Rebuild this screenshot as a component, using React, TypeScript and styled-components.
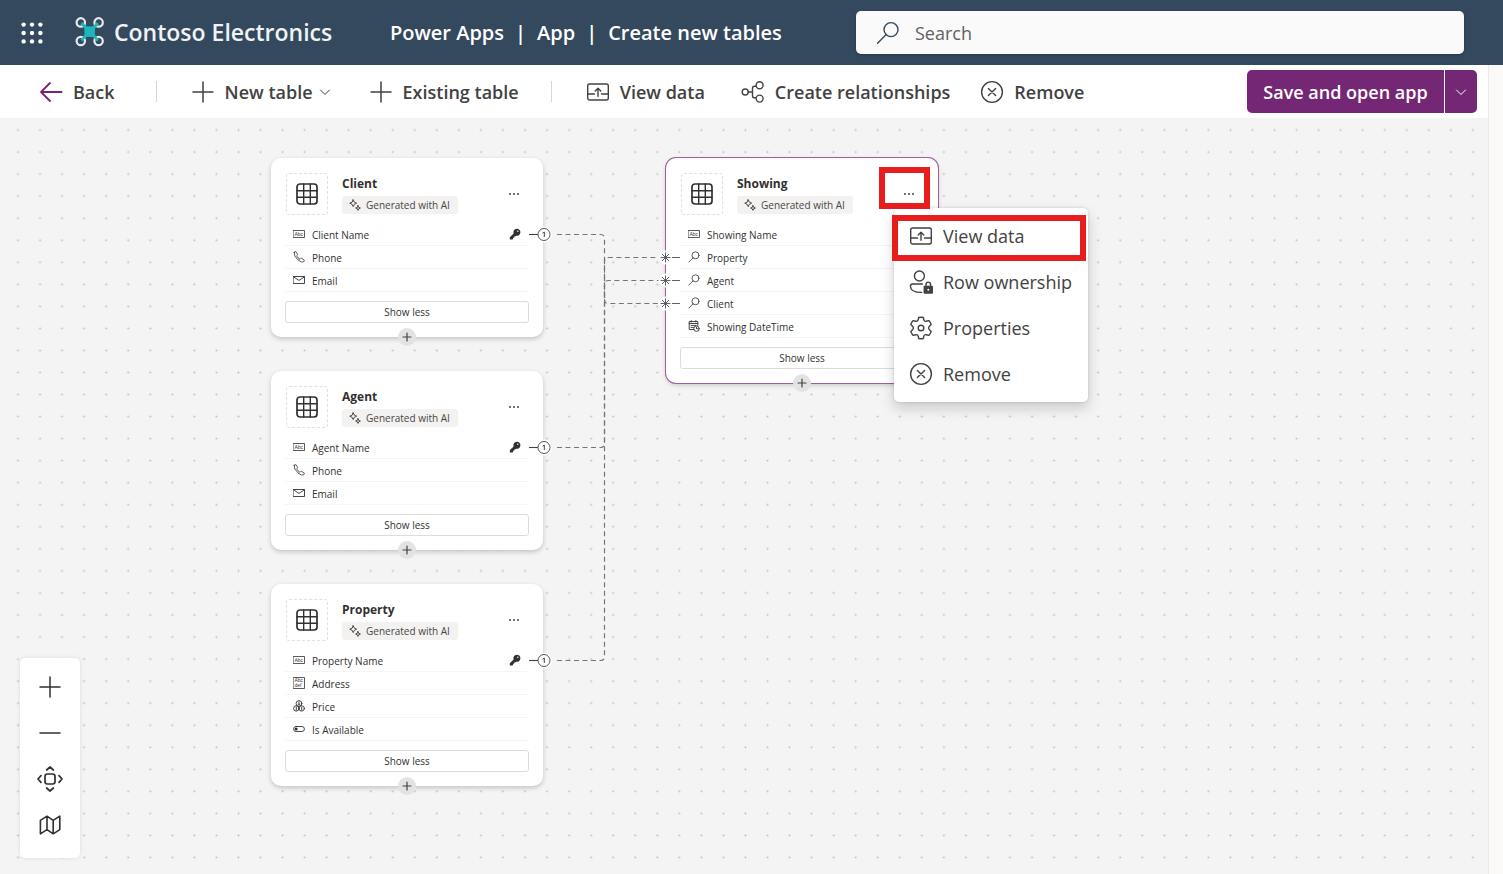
import React from "react";
import styled, { createGlobalStyle, css } from "styled-components";

const GlobalStyle = createGlobalStyle`
  *, *::before, *::after { box-sizing: border-box; }
  body {
    margin: 0;
    background: #faf9f8;
    color: #323130;
    font-family: "Open Sans", "Noto Sans", sans-serif;
  }
  button, input { font: inherit; color: inherit; }
  button { border: 0; padding: 0; background: none; cursor: pointer; }
`;

/* ---------- icons ---------- */

type IconProps = { size?: number };

const Svg = ({
  size = 24,
  box = 24,
  stroke = 1.3,
  children,
}: {
  size?: number;
  box?: number;
  stroke?: number;
  children: React.ReactNode;
}) => (
  <svg
    width={size}
    height={size}
    viewBox={`0 0 ${box} ${box}`}
    fill="none"
    stroke="currentColor"
    strokeWidth={stroke}
    strokeLinecap="round"
    strokeLinejoin="round"
    aria-hidden="true"
  >
    {children}
  </svg>
);

const WaffleIcon = () => (
  <svg width="22" height="22" viewBox="0 0 22 22" fill="#fff" aria-hidden="true">
    {[2.6, 11, 19.4].map((y) =>
      [2.6, 11, 19.4].map((x) => <circle key={`${x}-${y}`} cx={x} cy={y} r="2.2" />)
    )}
  </svg>
);

const DroneLogo = () => (
  <svg width="30" height="30" viewBox="0 0 30 30" fill="none" aria-hidden="true">
    <g stroke="#e6eaee" strokeWidth="2.2">
      <circle cx="5.8" cy="5.4" r="4.2" />
      <circle cx="23.600" cy="5.400" r="4.200" />
      <circle cx="5.800" cy="24" r="4.200" />
      <circle cx="23.600" cy="24" r="4.200" />
    </g>
    <path
      d="M7.600 5Q14.700 15.200 21.800 5L24 7.200Q14.700 14.700 24 22.200L21.800 24.400Q14.700 14.200 7.600 24.400L5.400 22.200Q14.700 14.700 5.400 7.200Z"
      fill="#1fb5bd"
    />
    <circle cx="14.700" cy="14.700" r="5.400" fill="#1fb5bd" />
  </svg>
);

const SearchIcon = ({ size = 24 }: IconProps) => (
  <Svg size={size} stroke={size < 16 ? 1.6 : 1.4}>
    <circle cx="15" cy="8.6" r="7" />
    <path d="M10.2 13.6L1.6 22.2" />
  </Svg>
);

const BackIcon = () => (
  <Svg stroke={1.8}>
    <path d="M22.6 12H2M11 3L2 12l9 9" />
  </Svg>
);

const PlusIcon = () => (
  <Svg stroke={1.5}>
    <path d="M12 2v20M2 12h20" />
  </Svg>
);

const SmallPlusIcon = () => (
  <Svg size={10} box={10} stroke={1.2}>
    <path d="M5 1v8M1 5h8" />
  </Svg>
);

const MinusIcon = () => (
  <Svg stroke={1.5}>
    <path d="M2 12h20" />
  </Svg>
);

const ChevronIcon = () => (
  <Svg size={12} box={12} stroke={1}>
    <path d="M1.500 4L6 8.500 10.500 4" />
  </Svg>
);

const ViewDataIcon = () => (
  <Svg stroke={1.4}>
    <rect x="1.7" y="4" width="20.6" height="16" rx="2" />
    <path d="M2 14h6.5M15.5 14H22M12 16.2V8.4M9.2 11L12 8.2l2.8 2.8" />
  </Svg>
);

const RelationIcon = () => (
  <Svg stroke={1.4}>
    <circle cx="4.2" cy="12" r="3" />
    <circle cx="18.6" cy="5.2" r="3.5" />
    <circle cx="18.6" cy="18.6" r="3.5" />
    <path d="M7.2 12h4.3M15 6.2h-1.4q-2.1 0-2.1 2.1v7.4q0 2.1 2.1 2.1h1.4" />
  </Svg>
);

const RemoveIcon = () => (
  <Svg stroke={1.4}>
    <circle cx="12" cy="12" r="10.4" />
    <path d="M8.4 8.4l7.2 7.2M15.6 8.4l-7.2 7.2" />
  </Svg>
);

const OwnerIcon = () => (
  <Svg stroke={1.4}>
    <circle cx="10.400" cy="6" r="5" />
    <path d="M13.500 14H3.600Q1.400 14 1.400 16.200 1.400 22.400 12.600 22.400" />
    <rect x="14.600" y="15.800" width="9.400" height="8" rx="1" fill="currentColor" stroke="none" />
    <path d="M17 16v-1.600a2.300 2.300 0 0 1 4.600 0V16" />
    <circle cx="19.300" cy="19.800" r="1" fill="#fff" stroke="none" />
  </Svg>
);

const GearIcon = () => (
  <Svg stroke={1.4}>
    <circle cx="12" cy="12" r="2.800" />
    <path d="M9.700 1.500Q12 .9 14.300 1.500L14.900 4.100Q15.500 5.700 17.200 5.300L19.800 4.600Q21.500 6.300 22.200 8.600L20.200 10.500Q18.900 12 20.200 13.500L22.200 15.400Q21.500 17.700 19.800 19.400L17.200 18.700Q15.500 18.300 14.900 19.900L14.300 22.500Q12 23.100 9.700 22.500L9.100 19.900Q8.500 18.300 6.800 18.700L4.200 19.400Q2.500 17.700 1.800 15.400L3.800 13.500Q5.100 12 3.800 10.500L1.800 8.600Q2.500 6.300 4.200 4.600L6.800 5.300Q8.500 5.700 9.100 4.100Z" />
  </Svg>
);

const FitIcon = () => (
  <Svg size={28} box={28} stroke={1.7}>
    <rect x="9" y="9" width="10" height="10" rx="2.4" />
    <path d="M10.600 5L14 2l3.400 3M10.600 23l3.400 3 3.400-3M5 10.600L2 14l3 3.400M23 10.600L26 14l-3 3.400" />
  </Svg>
);

const MapIcon = () => (
  <Svg stroke={1.6}>
    <path d="M2.400 7.400L9 3.200l6.200 4.200 6.600-4.200v13.400L15.200 20.800 9 16.600l-6.600 4.200zM9 3.200v13.400M15.200 7.400v13.400" />
  </Svg>
);

const TableIcon = () => (
  <Svg stroke={1.7}>
    <rect x="2" y="2" width="20" height="20" rx="3" />
    <path d="M8.700 2v20M15.300 2v20M2 8.700h20M2 15.300h20" strokeWidth={1.4} />
  </Svg>
);

const SparkleIcon = () => (
  <Svg size={12} box={12} stroke={1}>
    <path d="M4.200 .8L5.300 3.100 7.600 4.200 5.300 5.300 4.200 7.600 3.100 5.300 .8 4.200 3.100 3.100z" />
    <path d="M9 6.600l.7 1.700 1.700.7-1.700.7L9 11.400l-.7-1.700L6.600 9l1.700-.7z" />
  </Svg>
);

const MoreIcon = () => (
  <svg width="12" height="4" viewBox="0 0 12 4" fill="currentColor" aria-hidden="true">
    <circle cx="2" cy="2" r=".9" />
    <circle cx="6" cy="2" r=".9" />
    <circle cx="10" cy="2" r=".9" />
  </svg>
);

const KeyIcon = () => (
  <svg width="12" height="12" viewBox="0 0 12 12" aria-hidden="true">
    <path
      d="M7.700 .8a3.500 3.500 0 1 1-.6 6.900L6.200 8.600H5.200v1.100H4.100v1.100L3.500 11.400H.8V9.300L4.600 5.500A3.500 3.500 0 0 1 7.700 .8z"
      fill="currentColor"
    />
    <circle cx="8.800" cy="3.200" r=".7" fill="#fff" />
  </svg>
);

const GlyphText = styled.text`
  font-family: "Liberation Sans", sans-serif;
  font-size: 5px;
  fill: currentColor;
  stroke: none;
`;

const TextFieldIcon = () => (
  <Svg size={12} box={12} stroke={0.8}>
    <rect x=".5" y="2.500" width="11" height="7" />
    <GlyphText x="1.500" y="8">Abc</GlyphText>
  </Svg>
);

const MultilineIcon = () => (
  <Svg size={12} box={12} stroke={0.8}>
    <rect x=".5" y=".5" width="11" height="11" />
    <GlyphText x="1.500" y="5.200">Abc</GlyphText>
    <GlyphText x="1.500" y="10.200">def</GlyphText>
  </Svg>
);

const PhoneIcon = () => (
  <Svg size={12} box={12} stroke={0.8}>
    <path d="M1.200 1.300L2.800 .6 4.800 3.600 3.600 4.700Q4.600 7 7.100 8.300L8.300 7.100 11.400 9.200 10.600 10.900Q8.800 12 5 8.900 .4 5 1.200 1.300z" />
  </Svg>
);

const MailIcon = () => (
  <Svg size={12} box={12} stroke={0.9}>
    <rect x=".5" y="2.500" width="11" height="7" />
    <path d="M.8 3L6 6.400 11.200 3" />
  </Svg>
);

const DateIcon = () => (
  <Svg size={12} box={12} stroke={0.9}>
    <path d="M5.500 9.500H1.200v-8h8.600v4M1.200 3.500h8.600M3 5.400h5M3 7.400h2.500M3.200 .6v1.400M7.800 .6v1.400" />
    <circle cx="8.500" cy="8.700" r="2.700" />
    <path d="M8.500 7.300v1.500h1.200" />
  </Svg>
);

const CurrencyIcon = () => (
  <Svg size={12} box={12} stroke={0.9}>
    <circle cx="6" cy="3.500" r="2.900" />
    <circle cx="3.300" cy="8.400" r="2.700" />
    <circle cx="8.700" cy="8.400" r="2.700" />
    <path d="M6 2v3M3.300 7v3M8.700 7v3M5.200 4.200h1.600" />
  </Svg>
);

const ToggleIcon = () => (
  <Svg size={12} box={12} stroke={0.9}>
    <rect x=".6" y="3.500" width="10.800" height="5" rx="2.500" />
    <circle cx="3.200" cy="6" r="1.500" fill="currentColor" stroke="none" />
  </Svg>
);

/* ---------- header ---------- */

const Page = styled.div`
  display: flex;
  flex-direction: column;
  min-height: 100vh;
`;

const Header = styled.header`
  display: flex;
  align-items: center;
  height: 65px;
  padding: 0 39px 0 20px;
  background: #34495e;
  color: #fff;
`;

const Waffle = styled.button`
  display: flex;
  align-items: center;
  justify-content: center;
  width: 24px;
  height: 24px;
`;

const Brand = styled.a`
  display: flex;
  align-items: center;
  gap: 9px;
  margin-left: 31px;
  width: 315px;
  padding-bottom: 2px;
  color: #f0f3f5;
  font-size: 23px;
  line-height: 30px;
  font-weight: 600;
  text-decoration: none;
  white-space: nowrap;
`;

const Crumbs = styled.nav`
  display: flex;
  flex: none;
  gap: 11px;
  width: 466px;
  font-size: 20px;
  line-height: 28px;
  font-weight: 600;
  white-space: nowrap;

  a { color: inherit; text-decoration: none; }
`;

const SearchBox = styled.label`
  display: flex;
  flex: 1;
  align-items: center;
  gap: 15px;
  height: 43px;
  padding: 0 20px;
  border-radius: 5px;
  background: #fafafa;
  box-shadow: 0 1px 3px rgba(0, 0, 0, 0.25);
  color: #34495e;
`;

const SearchInput = styled.input.attrs({ type: "search" })`
  flex: 1;
  min-width: 0;
  padding: 0;
  border: 0;
  outline: 0;
  background: transparent;
  font-size: 18px;
  line-height: 28px;

  &::placeholder { color: #616161; opacity: 1; }
`;

/* ---------- command bar ---------- */

const Body = styled.main`
  display: flex;
  flex: 1;
  flex-direction: column;
  margin-right: 14px;
  border-right: 1px solid #edebe9;
`;

const CommandBar = styled.div`
  display: flex;
  align-items: center;
  height: 53px;
  padding: 0 11px 0 39px;
  background: #fff;
`;

const Command = styled.button<{ $gap?: number }>`
  display: flex;
  align-items: center;
  gap: 10px;
  margin-right: ${(p) => p.$gap ?? 36}px;
  color: #424242;
  font-size: 18px;
  line-height: 26px;
  font-weight: 600;
  white-space: nowrap;

  > svg:last-child:not(:first-child) { margin-left: -4px; }
`;

const Purple = styled.span`
  display: flex;
  color: #742774;
`;

const Divider = styled.span<{ $after: number }>`
  width: 1px;
  height: 21px;
  margin-right: ${(p) => p.$after}px;
  background: #d6d6d6;
`;

const SplitButton = styled.div`
  display: flex;
  height: 43px;
  margin-left: auto;
  border-radius: 5px;
  overflow: hidden;
  background: #742774;
  color: #fff;
  font-size: 18px;
  line-height: 26px;
  font-weight: 600;
  white-space: nowrap;
`;

const SaveButton = styled.button`
  width: 197px;
`;

const SaveMenuButton = styled.button`
  display: flex;
  align-items: center;
  justify-content: center;
  width: 33px;
  border-left: 1px solid #fff;
`;

/* ---------- canvas ---------- */

const Canvas = styled.section`
  position: relative;
  flex: 1;
  min-height: 700px;
  overflow: hidden;
  background: #f4f4f4;
`;

const Backdrop = styled.svg`
  position: absolute;
  inset: 0;
  width: 100%;
  height: 100%;
`;

const Card = styled.article<{ $x: number; $y: number; $selected?: boolean }>`
  position: absolute;
  left: ${(p) => p.$x}px;
  top: ${(p) => p.$y}px;
  width: 272px;
  padding: 15px 14px 14px;
  border-radius: 10px;
  background: #fff;
  box-shadow: ${(p) => (p.$selected ? "0 0 0 1px #a15fa1, " : "")}0 2px 5px rgba(0, 0, 0, 0.2);
`;

const CardHead = styled.div`
  display: flex;
  gap: 14px;
  height: 42px;
  padding: 0 9px 0 1px;
`;

const TableTile = styled.div`
  display: flex;
  align-items: center;
  justify-content: center;
  width: 42px;
  height: 42px;
  border: 1px dashed #e0e0e0;
  border-radius: 3px;
`;

const CardTitles = styled.div`
  display: flex;
  flex: 1;
  flex-direction: column;
  align-items: flex-start;
  gap: 2px;
  padding-top: 1px;
`;

const CardTitle = styled.h2`
  margin: 0;
  font-size: 12px;
  line-height: 20px;
  font-weight: 700;
`;

const AiTag = styled.span`
  display: flex;
  align-items: center;
  gap: 5px;
  height: 18px;
  padding: 0 8px 0 7px;
  border-radius: 3px;
  background: #f3f2f1;
  color: #484644;
  font-size: 10px;
  line-height: 18px;
`;

const MoreButton = styled.button`
  display: flex;
  align-items: center;
  height: 42px;
`;

const Fields = styled.ul`
  margin: 8px 0 9px;
  padding: 0;
  list-style: none;
`;

const Field = styled.li`
  position: relative;
  display: flex;
  align-items: center;
  gap: 7px;
  height: 23px;
  padding: 0 8px;
  border-bottom: 1px solid #f5f5f5;
  font-size: 10px;
  line-height: 20px;
`;

const FieldLabel = styled.span`
  padding-top: 2px;
`;

const KeyMark = styled.span`
  display: flex;
  margin-left: auto;
`;

const handle = css`
  position: absolute;
  top: 2px;
  width: 24px;
  height: 18px;
`;

const OneHandle = styled.svg`
  ${handle}
  left: 100%;
`;

const ManyHandle = styled.svg`
  ${handle}
  right: 100%;
`;

const ShowLess = styled.button`
  display: block;
  width: 100%;
  height: 22px;
  border: 1px solid #dcdcdc;
  border-radius: 3px;
  font-size: 10px;
  line-height: 20px;
`;

const AddButton = styled.button`
  position: absolute;
  left: 50%;
  bottom: -9px;
  display: flex;
  align-items: center;
  justify-content: center;
  width: 18px;
  height: 18px;
  margin-left: -9px;
  border-radius: 50%;
  background: #e3e3e3;
  color: #424242;
`;

const Menu = styled.div`
  position: absolute;
  left: 894px;
  top: 90px;
  width: 194px;
  padding: 5px 0;
  border-radius: 5px;
  background: #fff;
  box-shadow: 0 6px 14px rgba(0, 0, 0, 0.18), 0 0 3px rgba(0, 0, 0, 0.14);
`;

const MenuItem = styled.button`
  display: flex;
  align-items: center;
  gap: 10px;
  width: 100%;
  height: 46px;
  padding: 0 15px;
  color: #424242;
  font-size: 18px;
  line-height: 26px;
  white-space: nowrap;
`;

const Highlight = styled.div<{ $x: number; $y: number; $w: number; $h: number }>`
  position: absolute;
  left: ${(p) => p.$x}px;
  top: ${(p) => p.$y}px;
  width: ${(p) => p.$w}px;
  height: ${(p) => p.$h}px;
  border: 6px solid #e81e1e;
  pointer-events: none;
`;

const ZoomPanel = styled.div`
  position: absolute;
  left: 20px;
  bottom: 16px;
  width: 60px;
  padding: 6px 0 10px;
  border-radius: 5px;
  background: #fff;
  box-shadow: 0 0 4px rgba(0, 0, 0, 0.1);
`;

const ZoomButton = styled.button`
  display: flex;
  align-items: center;
  justify-content: center;
  width: 100%;
  height: 46px;
`;

/* ---------- data ---------- */

type FieldData = { label: string; icon: React.ReactNode; key?: boolean; many?: boolean };
type TableData = { name: string; x: number; y: number; selected?: boolean; fields: FieldData[] };

const tables: TableData[] = [
  {
    name: "Client",
    x: 271,
    y: 40,
    fields: [
      { label: "Client Name", icon: <TextFieldIcon />, key: true },
      { label: "Phone", icon: <PhoneIcon /> },
      { label: "Email", icon: <MailIcon /> },
    ],
  },
  {
    name: "Agent",
    x: 271,
    y: 253,
    fields: [
      { label: "Agent Name", icon: <TextFieldIcon />, key: true },
      { label: "Phone", icon: <PhoneIcon /> },
      { label: "Email", icon: <MailIcon /> },
    ],
  },
  {
    name: "Property",
    x: 271,
    y: 466,
    fields: [
      { label: "Property Name", icon: <TextFieldIcon />, key: true },
      { label: "Address", icon: <MultilineIcon /> },
      { label: "Price", icon: <CurrencyIcon /> },
      { label: "Is Available", icon: <ToggleIcon /> },
    ],
  },
  {
    name: "Showing",
    x: 666,
    y: 40,
    selected: true,
    fields: [
      { label: "Showing Name", icon: <TextFieldIcon /> },
      { label: "Property", icon: <SearchIcon size={12} />, many: true },
      { label: "Agent", icon: <SearchIcon size={12} />, many: true },
      { label: "Client", icon: <SearchIcon size={12} />, many: true },
      { label: "Showing DateTime", icon: <DateIcon /> },
    ],
  },
];

const edges = [
  "M557 116.500H600.500Q604.500 116.500 604.500 120.500V181.500Q604.500 185.500 608.500 185.500H660",
  "M557 329.500H600.500Q604.500 329.500 604.500 325.500V166.500Q604.500 162.500 608.500 162.500H660",
  "M557 542.500H600.500Q604.500 542.500 604.500 538.500V143.500Q604.500 139.500 608.500 139.500H660",
];

const TableCard = ({ table }: { table: TableData }) => (
  <Card $x={table.x} $y={table.y} $selected={table.selected}>
    <CardHead>
      <TableTile>
        <TableIcon />
      </TableTile>
      <CardTitles>
        <CardTitle>{table.name}</CardTitle>
        <AiTag>
          <SparkleIcon />
          Generated with AI
        </AiTag>
      </CardTitles>
      <MoreButton aria-label={`More options for ${table.name}`}>
        <MoreIcon />
      </MoreButton>
    </CardHead>
    <Fields>
      {table.fields.map((f) => (
        <Field key={f.label}>
          {f.icon}
          <FieldLabel>{f.label}</FieldLabel>
          {f.key && (
            <>
              <KeyMark>
                <KeyIcon />
              </KeyMark>
              <OneHandle viewBox="0 0 24 18" aria-hidden="true">
                <circle cx="15" cy="9.500" r="8" fill="#fff" />
                <path d="M0 9.500h9" stroke="#424242" strokeWidth="1.100" />
                <circle cx="15" cy="9.500" r="6" fill="#fff" stroke="#555" />
                <path d="M13.600 8.300l1.700-1.300v5" stroke="#424242" fill="none" />
              </OneHandle>
            </>
          )}
          {f.many && (
            <ManyHandle viewBox="0 0 24 18" aria-hidden="true">
              <circle cx="9.500" cy="9.500" r="7" fill="#fff" />
              <path
                d="M16 9.500h8M4.500 9.500h10M9.500 4.500v10M6 6l7 7M13 6l-7 7"
                stroke="#505050"
                strokeWidth=".9"
              />
            </ManyHandle>
          )}
        </Field>
      ))}
    </Fields>
    <ShowLess>Show less</ShowLess>
    <AddButton aria-label={`Add field to ${table.name}`}>
      <SmallPlusIcon />
    </AddButton>
  </Card>
);

export default function App() {
  return (
    <>
      <GlobalStyle />
      <Page>
        <Header>
          <Waffle aria-label="App launcher">
            <WaffleIcon />
          </Waffle>
          <Brand href="#">
            <DroneLogo />
            Contoso Electronics
          </Brand>
          <Crumbs aria-label="Breadcrumb">
            <a href="#">Power Apps</a>
            <span>|</span>
            <a href="#">App</a>
            <span>|</span>
            <a href="#">Create new tables</a>
          </Crumbs>
          <SearchBox>
            <SearchIcon />
            <SearchInput placeholder="Search" aria-label="Search" />
          </SearchBox>
        </Header>
        <Body>
          <CommandBar>
            <Command $gap={41}>
              <Purple>
                <BackIcon />
              </Purple>
              Back
            </Command>
            <Divider $after={34} />
            <Command $gap={38}>
              <PlusIcon />
              New table
              <ChevronIcon />
            </Command>
            <Command $gap={32}>
              <PlusIcon />
              Existing table
            </Command>
            <Divider $after={34} />
            <Command>
              <ViewDataIcon />
              View data
            </Command>
            <Command $gap={30}>
              <RelationIcon />
              Create relationships
            </Command>
            <Command>
              <RemoveIcon />
              Remove
            </Command>
            <SplitButton>
              <SaveButton>Save and open app</SaveButton>
              <SaveMenuButton aria-label="More save options">
                <ChevronIcon />
              </SaveMenuButton>
            </SplitButton>
          </CommandBar>
          <Canvas aria-label="Table diagram">
            <Backdrop aria-hidden="true">
              <defs>
                <pattern
                  id="dots"
                  width="22"
                  height="22"
                  patternUnits="userSpaceOnUse"
                  patternTransform="translate(7 1) scale(1.002)"
                >
                  <circle cx="11" cy="11" r="1" fill="#c0c0c0" />
                </pattern>
              </defs>
              <rect width="100%" height="100%" fill="url(#dots)" />
              <g fill="none" stroke="#757575" strokeWidth="1.2" strokeDasharray="5 3.5">
                {edges.map((d) => (
                  <path key={d} d={d} />
                ))}
              </g>
            </Backdrop>
            {tables.map((t) => (
              <TableCard key={t.name} table={t} />
            ))}
            <Menu role="menu" aria-label="Showing options">
              <MenuItem role="menuitem">
                <ViewDataIcon />
                View data
              </MenuItem>
              <MenuItem role="menuitem">
                <OwnerIcon />
                Row ownership
              </MenuItem>
              <MenuItem role="menuitem">
                <GearIcon />
                Properties
              </MenuItem>
              <MenuItem role="menuitem">
                <RemoveIcon />
                Remove
              </MenuItem>
            </Menu>
            <Highlight $x={879} $y={49} $w={51} $h={42} />
            <Highlight $x={892} $y={97} $w={194} $h={46} />
            <ZoomPanel>
              <ZoomButton aria-label="Zoom in">
                <PlusIcon />
              </ZoomButton>
              <ZoomButton aria-label="Zoom out">
                <MinusIcon />
              </ZoomButton>
              <ZoomButton aria-label="Fit to screen">
                <FitIcon />
              </ZoomButton>
              <ZoomButton aria-label="Toggle map">
                <MapIcon />
              </ZoomButton>
            </ZoomPanel>
          </Canvas>
        </Body>
      </Page>
    </>
  );
}
